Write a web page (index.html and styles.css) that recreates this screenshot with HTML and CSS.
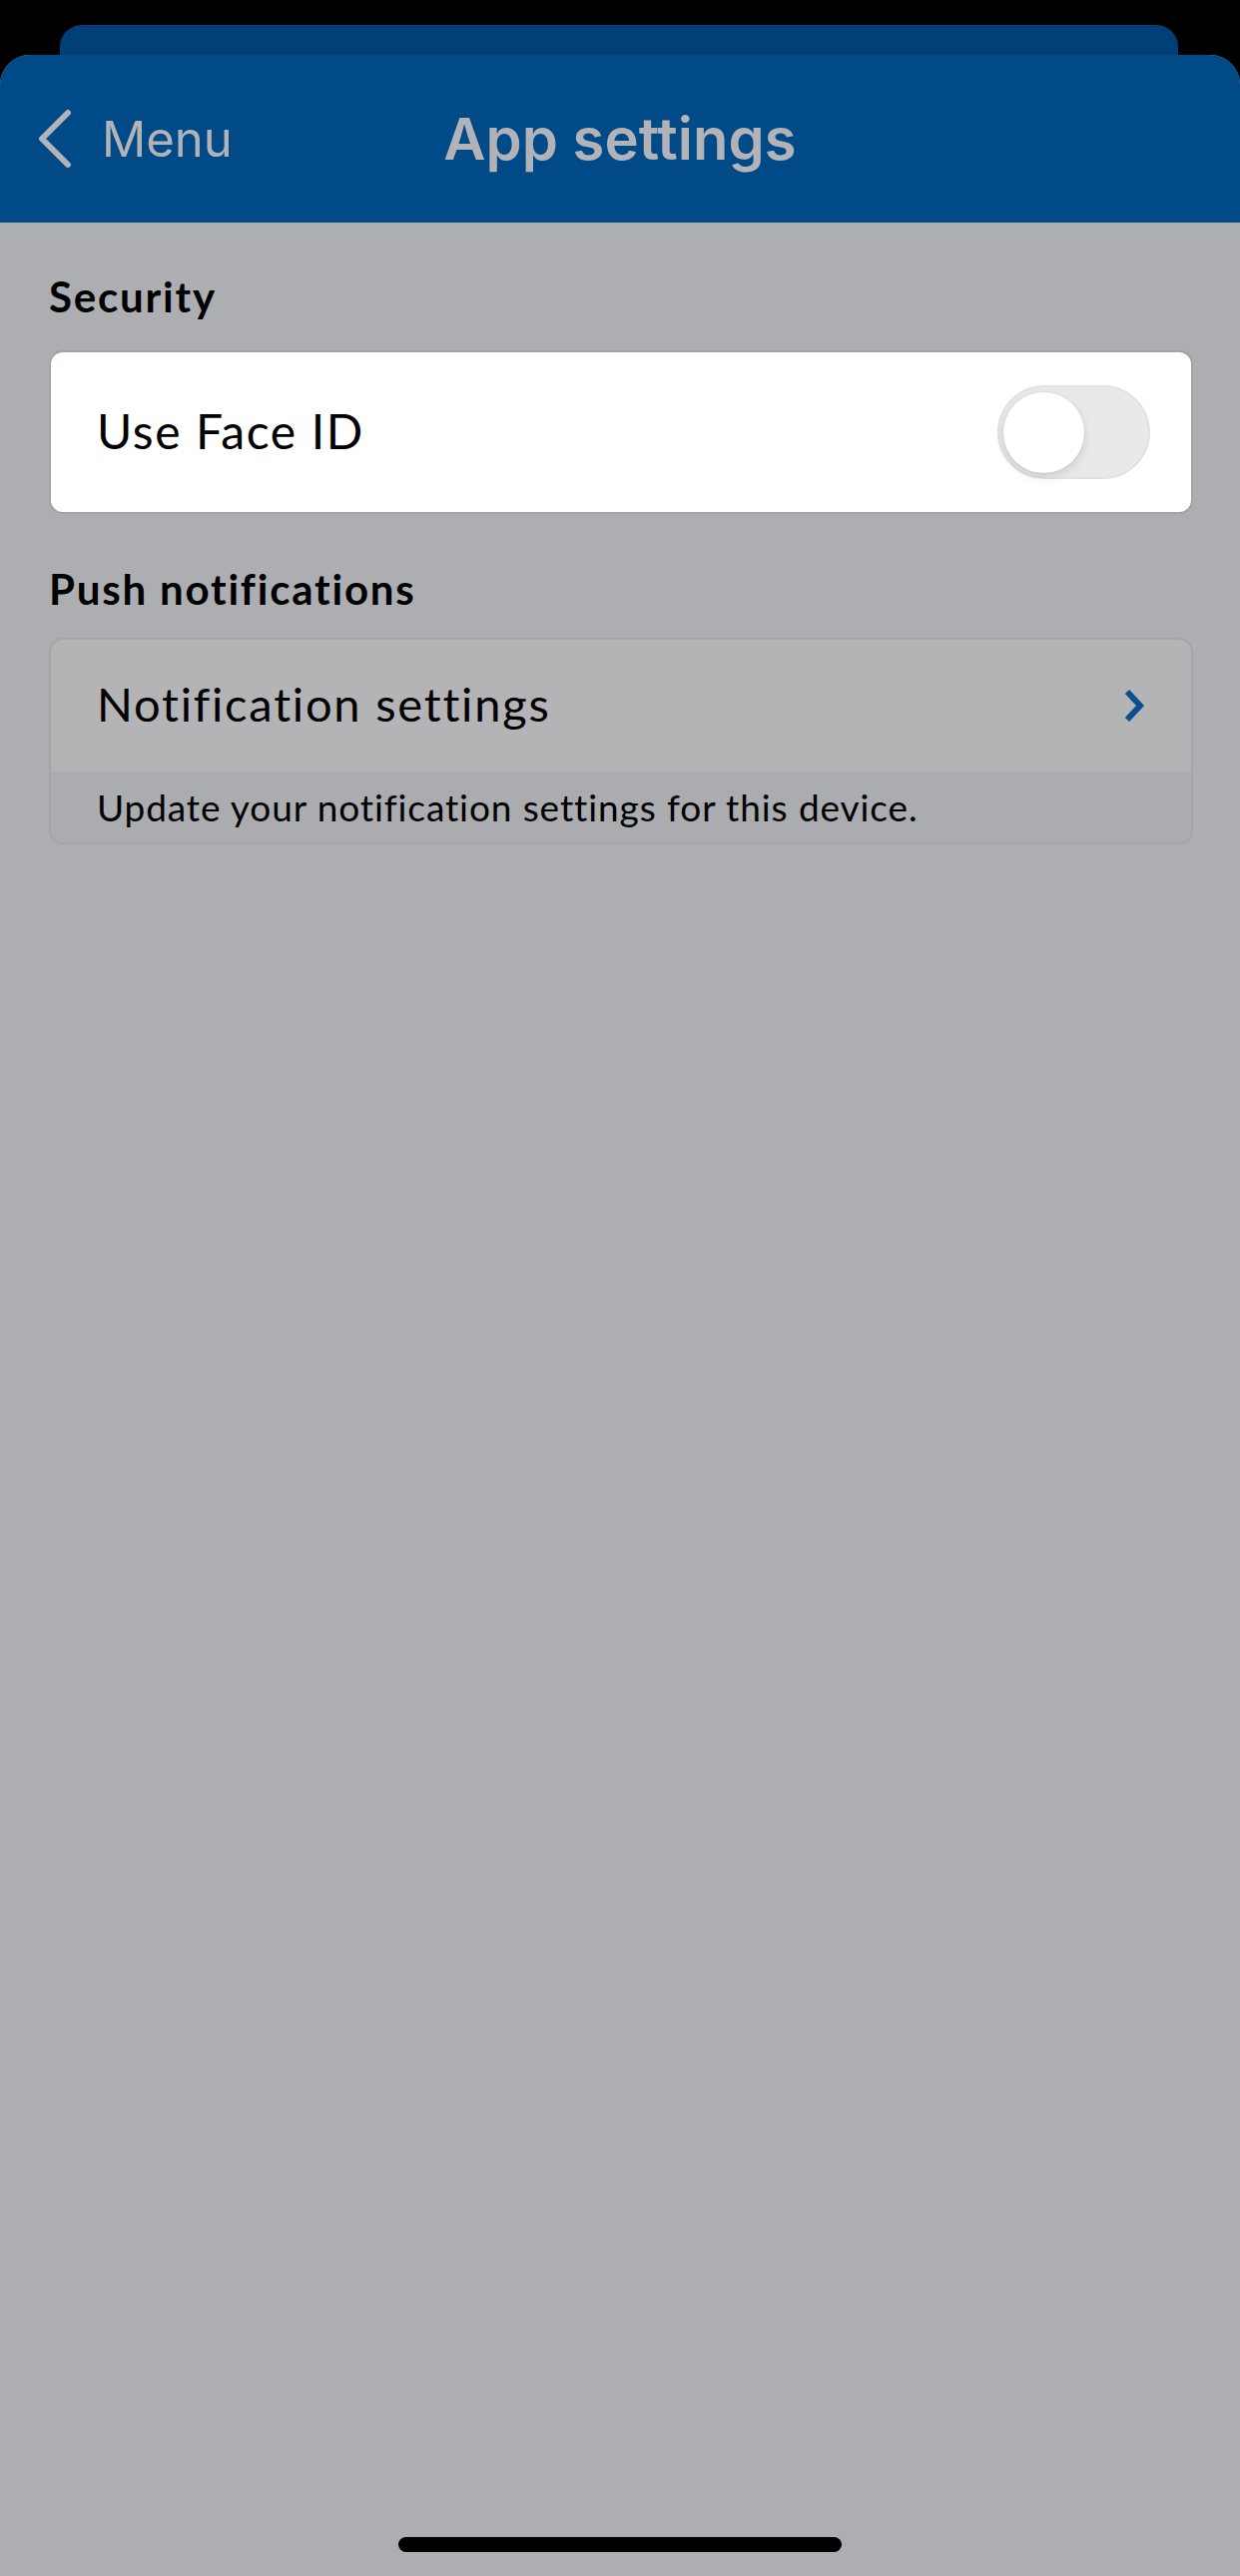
FILE: index.html
```html
<!DOCTYPE html>
<html lang="en">
  <head>
    <meta charset="UTF-8" />
    <meta name="viewport" content="width=device-width, initial-scale=1.0" />
    <title>App settings</title>
    <link rel="stylesheet" href="styles.css">
  </head>
  <body>
    <div class="screen">
      <div class="sheet-behind"></div>
      <div class="sheet">
        <div class="navbar">
          <a href="javascript:;" class="back">
            <svg width="36" height="62" viewBox="0 0 36 62">
              <polyline points="30,5 4,31 30,57" />
            </svg>
            <span>Menu</span>
          </a>
          <h1 class="title">App settings</h1>
          <span></span>
        </div>

        <div class="content">
          <h2 class="section-title">Security</h2>
          <div class="card card-lit">
            <div class="row">
              <span class="row-label">Use Face ID</span>
              <div class="switch"><span class="knob"></span></div>
            </div>
          </div>

          <h2 class="section-title">Push notifications</h2>
          <div class="card">
            <a href="javascript:;" class="row row-link">
              <span class="row-label">Notification settings</span>
              <svg class="chevron" width="24" height="36" viewBox="0 0 24 36">
                <polyline points="5,4 18,18 5,32" />
              </svg>
            </a>
            <div class="row-note">Update your notification settings for this device.</div>
          </div>
        </div>

        <div class="home-bar"><span></span></div>
      </div>
    </div>
  </body>
</html>
```

FILE: styles.css
```css
* {
  margin: 0;
  padding: 0;
  box-sizing: border-box;
}
body {
  background-color: #000;
  font-family: Lato, "Noto Sans", sans-serif;
  color: #000;
}
a {
  text-decoration: none;
  color: inherit;
}
.screen {
  padding-top: 25px;
  min-height: 2581px;
  display: flex;
  flex-direction: column;
}
/* the card peeking out behind the current one */
.sheet-behind {
  height: 30px;
  margin: 0 62px 0 60px;
  background: #003f77;
  border-radius: 22px 22px 0 0;
}
.sheet {
  flex: 1;
  display: flex;
  flex-direction: column;
  background: #adaeb2;
  border-radius: 30px 30px 0 0;
  overflow: hidden;
}
.navbar {
  height: 168px;
  background: #004a87;
  display: grid;
  grid-template-columns: 1fr auto 1fr;
  align-items: center;
  font-family: Inter, "Liberation Sans", sans-serif;
  color: #b1b3b8;
}
.back {
  display: flex;
  align-items: center;
  padding-left: 38px;
  font-size: 49px;
  gap: 28px;
}
.back svg polyline {
  fill: none;
  stroke: #b1b3b8;
  stroke-width: 6;
  stroke-linecap: round;
  stroke-linejoin: round;
}
.title {
  font-size: 58px;
  font-weight: 600;
}
.content {
  flex: 1;
  padding: 49px 47px 0 49px;
}
.section-title {
  font-size: 42px;
  font-weight: 700;
  line-height: 50px;
  letter-spacing: 1.8px;
  margin-bottom: 29px;
}
.section-title + .card {
  margin-bottom: 50px;
}
.card + .section-title {
  margin-bottom: 24px;
}
.card {
  border: 2px solid #a4a5a9;
  border-radius: 14px;
  background: #b4b4b6;
  overflow: hidden;
}
.card-lit {
  background: #fff;
  border-color: #a2a3a7;
}
.row {
  display: flex;
  align-items: center;
  justify-content: space-between;
  height: 160px;
  padding: 0 41px 0 46px;
}
.row-label {
  font-size: 48px;
  letter-spacing: 1.6px;
  padding-bottom: 4px;
}
.row-link {
  height: 132px;
  padding-right: 45px;
}
.row-link .row-label {
  font-size: 47px;
  letter-spacing: 1.8px;
}
.chevron polyline {
  fill: none;
  stroke: #0b4f8f;
  stroke-width: 6;
}
.row-note {
  height: 71px;
  display: flex;
  align-items: center;
  padding-left: 46px;
  background: #abacaf;
  font-size: 37px;
  letter-spacing: 0.9px;
}
.switch {
  position: relative;
  width: 153px;
  height: 94px;
  border-radius: 47px;
  background: #e9e9eb;
  border: 2px solid #e2e2e4;
}
.knob {
  position: absolute;
  left: 4px;
  top: 5px;
  width: 81px;
  height: 81px;
  border-radius: 50%;
  background: #fff;
  box-shadow: 0 4px 10px rgba(0, 0, 0, 0.13), 0 0 0 1px rgba(0, 0, 0, 0.03);
}
.home-bar {
  display: flex;
  justify-content: center;
  padding-bottom: 24px;
}
.home-bar span {
  width: 444px;
  height: 15px;
  border-radius: 8px;
  background: #000;
}
```
